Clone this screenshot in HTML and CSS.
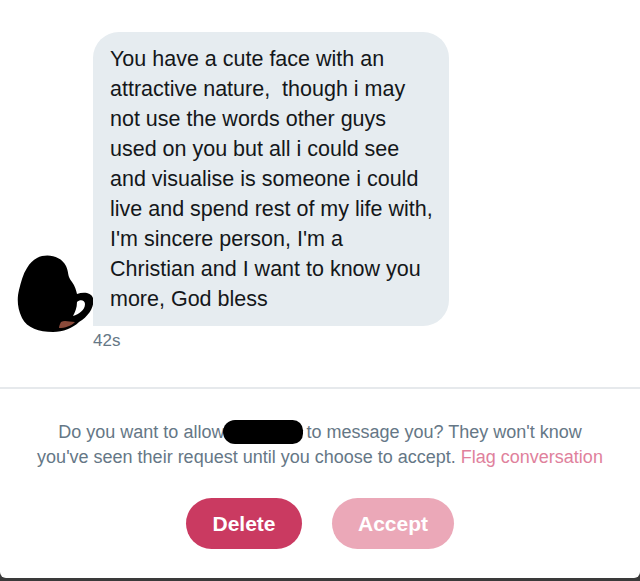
FILE: index.html
```html
<!DOCTYPE html>
<html>
<head>
<meta charset="utf-8">
<link rel="stylesheet" href="styles.css">
</head>
<body>
<div class="window">
  <section class="thread">
    <div class="msg-row">
      <svg class="avatar" width="78" height="80" viewBox="0 0 78 80">
        <path d="M20 4 C30 -1 44 2 49 12 C52 18 50 22 55 28 C58 32 59 36 60 40 C66 38 74 38 76 44 C78 52 72 62 62 68 C56 74 46 78 36 78 C22 78 10 74 5 64 C0 54 0 44 2 36 C4 28 6 20 10 14 C13 9 16 6 20 4 Z M60 48 C60 54 58 58 56 62 C62 60 68 56 68 50 C68 46 63 45 60 48 Z" fill="#000" fill-rule="evenodd"/>
        <path d="M44 68 C48 66 52 68 58 68 C54 72 48 74 42 74 C42 72 43 70 44 68 Z" fill="#8a4a3a"/>
      </svg>
      <div class="msg-col">
        <div class="bubble">You have a cute face with an<br>attractive nature,&nbsp; though i may<br>not use the words other guys<br>used on you but all i could see<br>and visualise is someone i could<br>live and spend rest of my life with,<br>I'm sincere person, I'm a<br>Christian and I want to know you<br>more, God bless</div>
        <div class="time">42s</div>
      </div>
    </div>
  </section>
  <section class="request">
    <p class="prompt">Do you want to allow <span class="redact"></span> to message you? They won't know<br>you've seen their request until you choose to accept. <a class="flag">Flag conversation</a></p>
    <div class="actions">
      <button class="btn delete">Delete</button>
      <button class="btn accept">Accept</button>
    </div>
  </section>
</div>
</body>
</html>
```
FILE: styles.css
```css
html, body {
  margin: 0;
  padding: 0;
  background: #3a3a3a;
}
body {
  font-family: "Liberation Sans", Arial, sans-serif;
  width: 640px;
  height: 581px;
  overflow: hidden;
}
.window {
  background: #fff;
  height: 578px;
  border-radius: 0 0 6px 6px;
  display: flex;
  flex-direction: column;
}
.thread {
  padding: 32px 0 0 17px;
  height: 389px;
  box-sizing: border-box;
  border-bottom: 2px solid #e6e9ec;
}
.msg-row {
  display: flex;
  align-items: flex-start;
}
.avatar {
  margin-top: 222px;
  flex: none;
}
.msg-col {
  margin-left: -2px;
}
.bubble {
  width: 322px;
  background: #e6ecf0;
  color: #14171a;
  font-size: 21.5px;
  line-height: 30px;
  padding: 12px 17px 12px 17px;
  border-radius: 26px 26px 26px 0;
  white-space: nowrap;
}
.time {
  color: #657786;
  font-size: 17px;
  margin-top: 5px;
}
.request {
  padding-top: 31px;
  text-align: center;
}
.prompt {
  margin: 0;
  color: #657786;
  font-size: 18px;
  line-height: 25px;
}
.redact {
  display: inline-block;
  width: 80px;
  height: 24px;
  background: #000;
  border-radius: 14px 12px 12px 14px;
  vertical-align: -6px;
  margin: 0 -2px 0 -6px;
}
.flag {
  color: #e0819c;
}
.actions {
  display: flex;
  justify-content: center;
  gap: 30px;
  margin-top: 28px;
}
.btn {
  border: none;
  border-radius: 26px;
  height: 51px;
  color: #fff;
  font-family: "Liberation Sans", Arial, sans-serif;
  font-weight: bold;
  font-size: 21px;
  padding: 0;
}
.delete {
  width: 116px;
  background: #ca3a61;
}
.accept {
  width: 122px;
  background: #eba8b8;
}
```
